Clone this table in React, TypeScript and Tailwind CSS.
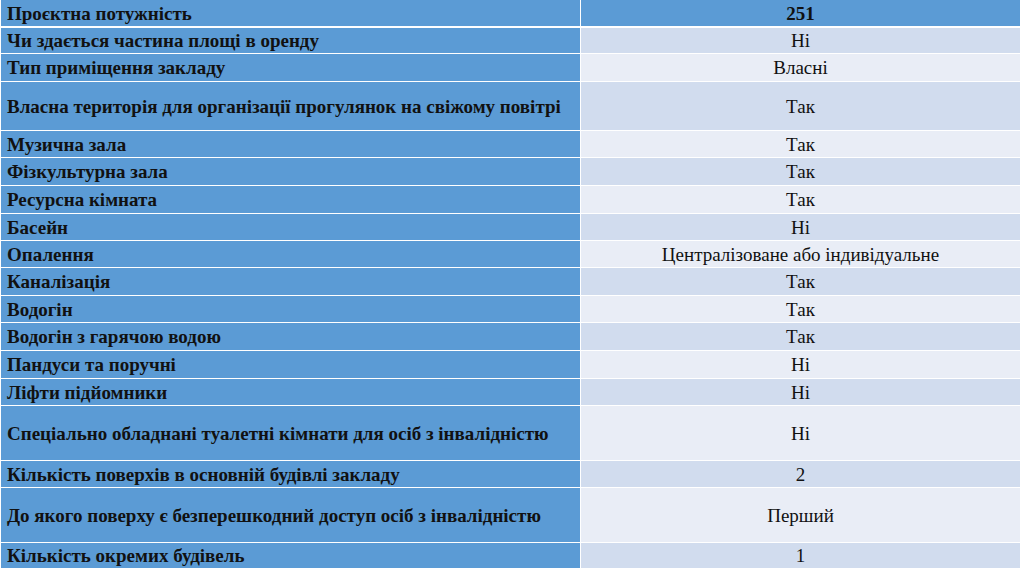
const rows = [
  { label: 'Чи здається частина площі в оренду', value: 'Ні', h: 'h-[25px]' },
  { label: 'Тип приміщення закладу', value: 'Власні', h: 'h-[27px]' },
  { label: 'Власна територія для організації прогулянок на свіжому повітрі', value: 'Так', h: 'h-[48px]' },
  { label: 'Музична зала', value: 'Так', h: 'h-[26px]' },
  { label: 'Фізкультурна зала', value: 'Так', h: 'h-[27px]' },
  { label: 'Ресурсна кімната', value: 'Так', h: 'h-[27px]' },
  { label: 'Басейн', value: 'Ні', h: 'h-[26px]' },
  { label: 'Опалення', value: 'Централізоване або індивідуальне', h: 'h-[26px]' },
  { label: 'Каналізація', value: 'Так', h: 'h-[27px]' },
  { label: 'Водогін', value: 'Так', h: 'h-[26px]' },
  { label: 'Водогін з гарячою водою', value: 'Так', h: 'h-[27px]' },
  { label: 'Пандуси та поручні', value: 'Ні', h: 'h-[27px]' },
  { label: 'Ліфти підйомники', value: 'Ні', h: 'h-[26px]' },
  { label: 'Спеціально обладнані туалетні кімнати для осіб з інвалідністю', value: 'Ні', h: 'h-[54px]' },
  { label: 'Кількість поверхів в основній будівлі закладу', value: '2', h: 'h-[26px]' },
  { label: 'До якого поверху є безперешкодний доступ осіб з інвалідністю', value: 'Перший', h: 'h-[54px]' },
  { label: 'Кількість окремих будівель', value: '1', h: 'h-[25px]' },
];

const serif = "font-['Liberation_Serif','Times_New_Roman',serif]";

export default function App() {
  return (
    <div className={`w-[1024px] h-[576px] bg-white pl-px pr-[4px] text-[19px] leading-none text-[#111] overflow-hidden ${serif}`}>
      {/* Header row */}
      <div className="grid grid-cols-[579px_1fr] gap-x-px h-[26px] mb-[2px]">
        <div className={`bg-[#5b9bd5] flex items-center pl-[6px] font-bold ${serif}`}>Проєктна потужність</div>
        <div className={`bg-[#5b9bd5] flex items-center justify-center font-bold ${serif}`}>251</div>
      </div>

      {/* Body rows */}
      <div className="flex flex-col gap-px">
        {rows.map((row, i) => (
          <div key={row.label} className={`grid grid-cols-[579px_1fr] gap-x-px ${row.h}`}>
            <div className={`bg-[#5b9bd5] flex items-center pl-[6px] font-bold whitespace-nowrap ${serif}`}>
              {row.label}
            </div>
            <div
              className={`flex items-center justify-center ${serif} ${i % 2 === 0 ? 'bg-[#d1dcee]' : 'bg-[#e9edf6]'}`}
            >
              {row.value}
            </div>
          </div>
        ))}
      </div>
    </div>
  );
}
